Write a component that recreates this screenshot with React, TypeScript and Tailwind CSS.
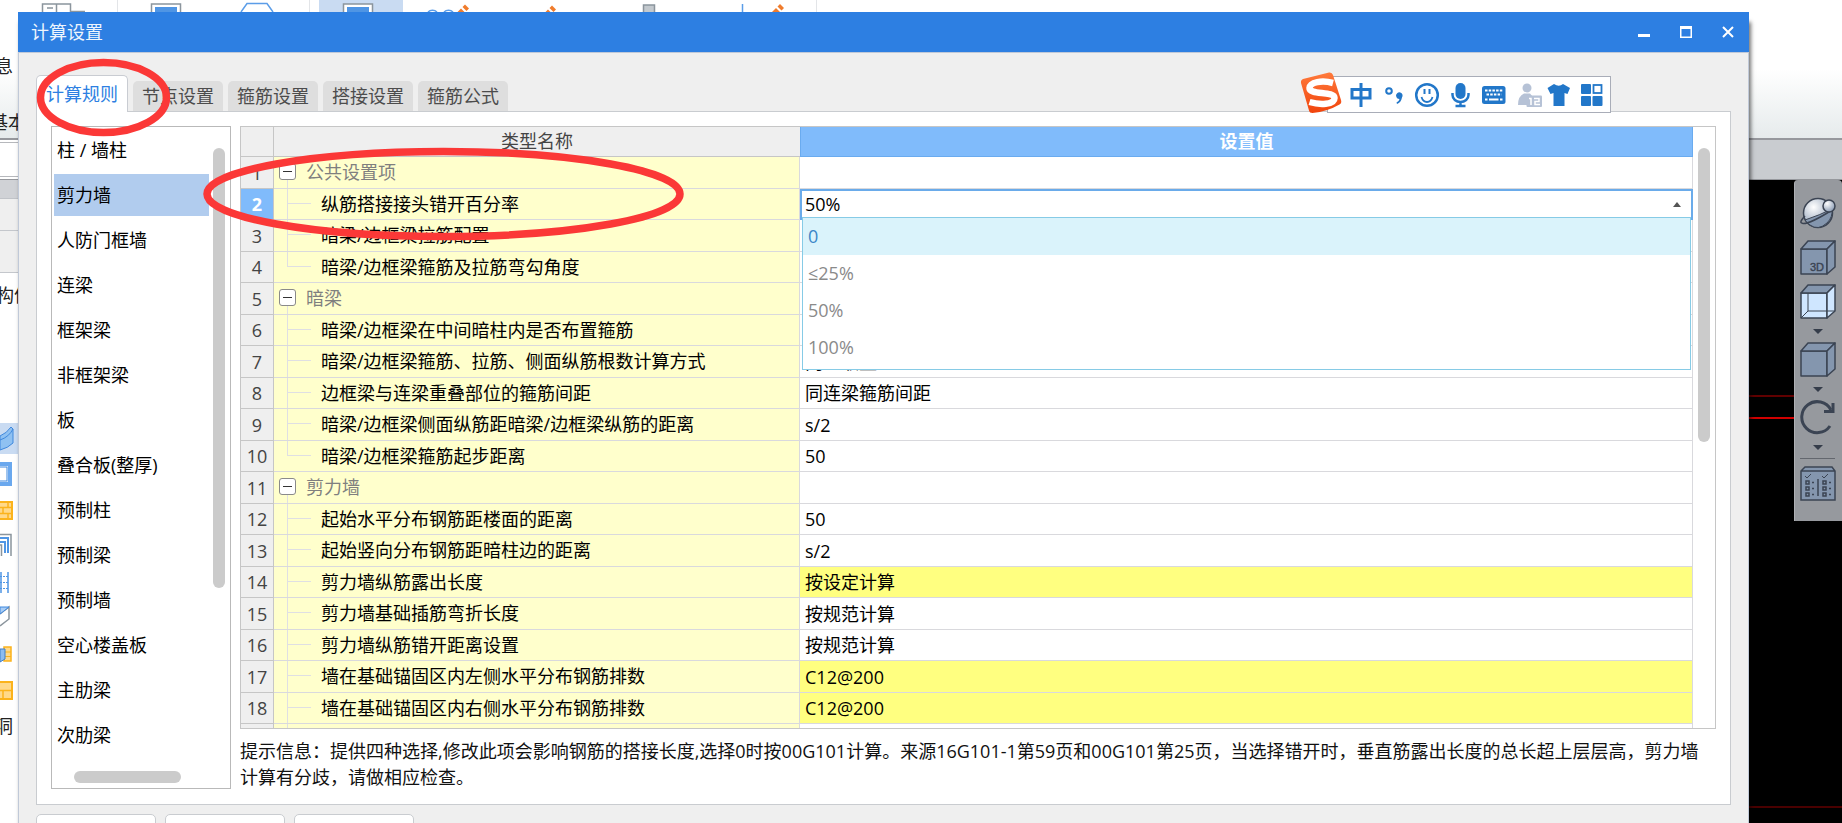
import { useState } from "react"
import clsx from "clsx"

interface Row {
  name: string
  value?: string
  group?: boolean
  last?: boolean
  marked?: boolean
}

const tabs = ["计算规则", "节点设置", "箍筋设置", "搭接设置", "箍筋公式"]

const components = [
  "柱 / 墙柱",
  "剪力墙",
  "人防门框墙",
  "连梁",
  "框架梁",
  "非框架梁",
  "板",
  "叠合板(整厚)",
  "预制柱",
  "预制梁",
  "预制墙",
  "空心楼盖板",
  "主肋梁",
  "次肋梁",
]

const rows: Row[] = [
  { name: "公共设置项", group: true },
  { name: "纵筋搭接接头错开百分率" },
  { name: "暗梁/边框梁拉筋配置" },
  { name: "暗梁/边框梁箍筋及拉筋弯勾角度", last: true },
  { name: "暗梁", group: true },
  { name: "暗梁/边框梁在中间暗柱内是否布置箍筋" },
  { name: "暗梁/边框梁箍筋、拉筋、侧面纵筋根数计算方式", value: "向上取整+1" },
  { name: "边框梁与连梁重叠部位的箍筋间距", value: "同连梁箍筋间距" },
  { name: "暗梁/边框梁侧面纵筋距暗梁/边框梁纵筋的距离", value: "s/2" },
  { name: "暗梁/边框梁箍筋起步距离", value: "50", last: true },
  { name: "剪力墙", group: true },
  { name: "起始水平分布钢筋距楼面的距离", value: "50" },
  { name: "起始竖向分布钢筋距暗柱边的距离", value: "s/2" },
  { name: "剪力墙纵筋露出长度", value: "按设定计算", marked: true },
  { name: "剪力墙基础插筋弯折长度", value: "按规范计算" },
  { name: "剪力墙纵筋错开距离设置", value: "按规范计算" },
  { name: "墙在基础锚固区内左侧水平分布钢筋排数", value: "C12@200", marked: true },
  { name: "墙在基础锚固区内右侧水平分布钢筋排数", value: "C12@200", marked: true },
  { name: "" },
]

const options = ["0", "≤25%", "50%", "100%"]

function RibbonIcons() {
  return (
    <svg className="block h-3 w-[830px]" viewBox="0 0 830 12" fill="none">
      <rect x="319" y="0" width="84" height="12" fill="#c9dbf2" />
      <g stroke="#e3e5e8">
        <path d="M117.5 0v12M309.5 0v12M816.5 0v12" />
      </g>
      <g stroke="#8b959d" strokeWidth="1.5">
        <path d="M42.5 12V4h28v8M56.5 4v8M47 8h6M71 11.5h14" />
        <path d="M151.5 12V4h29v8M343.5 12V4h29v8" fill="#fff" />
      </g>
      <path d="M155 7h22v5h-22zM347 7h22v5h-22z" fill="#4f95e4" />
      <path d="M241 12l6-8.500h20l6 8.500" stroke="#5b9de8" strokeWidth="1.500" />
      <path d="M428 12a6 5 0 0 1 9 0M444 12a6 5 0 0 1 9 0" stroke="#5b9de8" strokeWidth="1.500" />
      <g fill="#f07c2c">
        <path d="M465 4.500l4 4-2.500 2.500-4-4zM461 8.500l4 4h-8z" />
        <path d="M552 5.500l4 4-2.500 2.500-4-4zM548 9.500l3 3h-6z" />
        <path d="M780 4l4 4-2.500 2.500-4-4zM776 8l4 4h-8z" />
      </g>
      <path d="M643.500 12V5h11v7" fill="#c3c9ce" stroke="#8b959d" strokeWidth="1.500" />
      <path d="M742.500 4v8" stroke="#5b9de8" strokeWidth="1.500" />
    </svg>
  )
}

// slice of the component tree that stays visible left of the dialog
function LeftStrip() {
  return (
    <div className="flex w-[18px] flex-col overflow-hidden whitespace-nowrap bg-white">
      <div className="h-[19px] border-b border-[#c0c3c8] bg-[#d0d2d6]" />
      <div className="h-8 border-b border-[#c4c7cc] bg-[#efefef]" />
      <div className="h-[42px] border-b border-[#c4c7cc] bg-[#efefef]" />
      <span className="-ml-1 mt-[9px] leading-[26px]">构件</span>
      <svg className="mt-[115px] h-[282px] w-[18px] shrink-0" viewBox="0 0 18 282" fill="none">
        <rect width="18" height="31" fill="#c9dbf2" />
        <path d="M0 13q7-3 11-9l2 2v14q-5 5-13 7z" fill="#8fc1f2" stroke="#3f88dd" />
        <path d="M0 17q9-3 13-11" stroke="#3f88dd" />
        <rect x="-8" y="41" width="18" height="20" stroke="#6aa8ee" strokeWidth="4" />
        <rect x="-8" y="44" width="15" height="14" stroke="#3f88dd" />
        <rect x="-3" y="79" width="15" height="17" fill="#ffd98a" stroke="#fbb31c" strokeWidth="2" />
        <path d="M0 84.500h12M0 90.500h12M8 79v5M3 84v6M8 90v6" stroke="#fbb31c" strokeWidth="1.500" />
        <path d="M0 111.500h11V133" stroke="#8b959d" strokeWidth="1.500" />
        <path d="M0 115h8v15M0 119h5v11" stroke="#4f95e4" strokeWidth="2" />
        <path d="M0 122h1.500v11" stroke="#8b959d" strokeWidth="1.500" />
        <path d="M1 149v21M8 149v21" stroke="#4f95e4" strokeWidth="1.500" />
        <path d="M0 153.500h8M0 159.500h8M0 165.500h8" stroke="#4f95e4" strokeDasharray="2 1" />
        <path d="M0 191l9-7v12l-9 7" stroke="#8b959d" strokeWidth="1.500" />
        <path d="M0 184h9l-9 7z" fill="#a9cdf5" stroke="#3f88dd" />
        <path d="M4 224h7v14H4z" fill="#ffd98a" stroke="#fbb31c" strokeWidth="1.500" />
        <path d="M5 229h6M5 233.500h6" stroke="#fbb31c" />
        <path d="M0 226h5v10l-5 3z" fill="#8dbcf0" stroke="#3f7fc9" />
        <rect x="-3" y="259" width="15" height="17" fill="#ffd98a" stroke="#fbb31c" strokeWidth="2" />
        <path d="M0 267.500h12M3 267v9" stroke="#fbb31c" strokeWidth="1.500" />
      </svg>
      <span className="-ml-[5px] mt-2 leading-[26px]">洞</span>
    </div>
  )
}

function Cube({ label, wire }: { label?: string; wire?: boolean }) {
  return (
    <svg className="h-9 w-9" viewBox="0 0 36 36" stroke="#3b4453" strokeWidth="1.500" strokeLinejoin="round">
      <path d="M1 9h26v25H1z" fill={wire ? "#cfe6ff" : "#8496ae"} />
      <path d="M1 9l7-8h27l-8 8z" fill="#8496ae" />
      <path d="M27 9l8-8v26l-8 7z" fill={wire ? "#cfe6ff" : "#8496ae"} />
      {wire && <path d="M8 9v18h27M8 27l-7 7" fill="none" strokeWidth="1" />}
      {label && (
        <text x="10" y="31" fontSize="11" fill="#3b4453" strokeWidth=".4" fontFamily="Liberation Sans, sans-serif">
          {label}
        </text>
      )}
    </svg>
  )
}

function DownArrow() {
  return (
    <svg className="my-[7px] h-[8px] w-[10px]" viewBox="0 0 10 8">
      <path d="M0 2h10L5 7z" fill="#353d4a" />
    </svg>
  )
}

function ViewToolbar() {
  return (
    <div className="flex h-[341px] w-12 flex-col items-center rounded-t border-l border-[#aeb0b4] bg-[#96999e] pr-[2px] pt-4">
      <button aria-label="动态观察">
        <svg className="h-9 w-9" viewBox="0 0 36 36" fill="none" stroke="#3b4453">
          <defs>
            <radialGradient id="ball" cx=".35" cy=".3" r=".8">
              <stop offset="0" stopColor="#fff" />
              <stop offset="1" stopColor="#7d90ab" />
            </radialGradient>
          </defs>
          <circle cx="18" cy="17" r="14.500" fill="url(#ball)" strokeWidth="1.500" />
          <path d="M5 24Q20 19 32 13q1 8-5 14-9 8-17 2-3-2-5-5z" fill="#8496ae" />
          <path d="M5 20q-7 7-2 7.500Q10 28 32 14" strokeWidth="1.500" />
          <circle cx="29" cy="10" r="6" fill="url(#ball)" strokeWidth="1.500" />
        </svg>
      </button>
      <button className="mt-2" aria-label="三维">
        <Cube label="3D" />
      </button>
      <button className="mt-2" aria-label="线框">
        <Cube wire />
      </button>
      <DownArrow />
      <button aria-label="实体">
        <Cube />
      </button>
      <DownArrow />
      <button aria-label="旋转">
        <svg className="h-9 w-9" viewBox="0 0 36 36" fill="none" stroke="#3b4453" strokeWidth="3">
          <path d="M30 26A15.500 15.500 0 1 1 31 10" />
          <path d="M33 3v8.500h-9" />
        </svg>
      </button>
      <DownArrow />
      <div className="h-px w-[35px] bg-[#63676e]" />
      <button className="mt-[6px]" aria-label="显示设置">
        <svg className="h-9 w-9" viewBox="0 0 36 36" fill="none" stroke="#3b4453" strokeWidth="1.500">
          <path d="M1 6l4-4h27l3 4v29H1zM1 6h34" fill="#8496ae" />
          <path d="M18 14v17" />
          <path d="M5 11l2 2 4-4M22 11l2 2 4-4" strokeWidth="1" />
          <path d="M6 16h3v3H6zM6 22h3v3H6zM6 28h3v3H6zM23 16h3v3h-3zM23 22h3v3h-3zM23 28h3v3h-3zM12 17.500h2M12 23.500h2M12 29.500h2M29 17.500h2M29 23.500h2M29 29.500h2" />
        </svg>
      </button>
    </div>
  )
}

function InputMethodBar() {
  return (
    <div className="absolute right-[231px] top-[76px] flex h-[37px] w-[284px] items-center border border-[#a9adb8] bg-white pl-[22px]">
      <svg className="absolute -left-[30px] -top-[6px] h-[44px] w-[46px]" viewBox="0 0 46 44">
        <defs>
          <linearGradient id="sogou" x1="0" y1="0" x2="0" y2="1">
            <stop offset="0" stopColor="#ff7a3c" />
            <stop offset="1" stopColor="#f1440c" />
          </linearGradient>
        </defs>
        <path
          d="M5 8L31 1.500q3-.5 4 2.500l8 25q1 3-1.500 4.500-12 7-27 8.500-3 0-3.500-2.500L3 12q-.5-3 2-4z"
          fill="url(#sogou)"
        />
        <path
          d="M35 12C24 9 12 11 11.500 17c-.5 7 25 3 25 10 0 7-15 7-25 4"
          fill="none"
          stroke="#fff"
          strokeWidth="6.500"
        />
      </svg>
      <svg className="h-[26px] w-[231px] shrink-0" viewBox="0 0 231 26" fill="none" stroke="#2277c9">
        <path d="M2 7.500h18v8.500H2zM11 1v24" strokeWidth="3" />
        <circle cx="39" cy="9" r="2.800" strokeWidth="2" />
        <path d="M46 13.500a3.300 3.300 0 1 1 6 2q-1 5-5 6.500l-.5-1.500q2.500-1 3-3.500-3 0-3.500-3.500z" fill="#2277c9" stroke="none" />
        <circle cx="77" cy="13" r="10.800" strokeWidth="2.500" />
        <path d="M74.500 7v5M79.500 7v5" strokeWidth="2" />
        <path d="M71.500 15q1.500 5 5.500 5t5.500-5" strokeWidth="1.800" />
        <rect x="105.500" y="1" width="10" height="16" rx="5" fill="#2277c9" stroke="none" />
        <path d="M102.500 11v2a8 7 0 0 0 16 0v-2M110.500 20v4M105.500 24h10" strokeWidth="2.500" />
        <rect x="132" y="4" width="23.500" height="18" rx="2.500" fill="#2277c9" stroke="none" />
        <g stroke="#fff" strokeWidth="2.200">
          <path d="M135 8.500h18M136.500 12.500h15" strokeDasharray="2.500 1.200" />
          <path d="M135 17.500h2.500M139 17.500h9.500M150 17.500h2.500" />
        </g>
        <g fill="#b6c2d6" stroke="none">
          <circle cx="177" cy="6" r="4.500" />
          <path d="M174 11.500h6l3 3.500h-6v8h-9q0-9 6-11.500z" />
          <rect x="176.500" y="13.500" width="15.500" height="11.500" rx="1" />
          <path d="M179 16.500h2v6.500M184 16.500h5v3h-4v3h5" fill="none" stroke="#fff" strokeWidth="1.500" />
        </g>
        <path d="M204 2q5 3.500 9 0l7 4-2.500 6-3-1v13h-11V11l-3 1-3-6z" fill="#2277c9" stroke="none" />
      </svg>
      <svg className="h-[22px] w-[22px] shrink-0" viewBox="0 0 22 22" fill="#2277c9">
        <rect width="10" height="10" rx="1" />
        <rect y="12" width="10" height="10" rx="1" />
        <rect x="11.500" y="12" width="10" height="10" rx="1" />
        <rect x="12.500" y="1" width="8" height="8" fill="#fff" stroke="#2277c9" strokeWidth="1.800" />
      </svg>
    </div>
  )
}

function NameCell({ row, tall }: { row: Row; tall: boolean }) {
  const height = tall ? "h-[31px]" : "h-[30px]"
  if (row.group) {
    return (
      <div className={clsx("flex pl-[5px] text-[#7f7f7f]", height)}>
        <span className="flex w-[17px] flex-col items-center pt-[6px]">
          <button
            aria-label="折叠"
            className="flex h-[17px] w-[17px] shrink-0 items-center justify-center rounded-[3px] border border-[#8a8a8a] bg-white"
          >
            <span className="h-px w-[9px] bg-[#333]" />
          </button>
          <span className="w-px flex-1 bg-[#dfdfe3]" />
        </span>
        <span className="ml-[10px] leading-[31px]">{row.name}</span>
      </div>
    )
  }
  return (
    <div className={clsx("flex pl-[13px] text-black", height)}>
      <span className="flex w-6 flex-col">
        <span className={clsx("h-[15px] border-l border-[#dfdfe3]", row.name && "border-b")} />
        {!row.last && <span className="flex-1 border-l border-[#dfdfe3]" />}
      </span>
      <span className="ml-[10px] leading-[31px]">{row.name}</span>
    </div>
  )
}

function SettingsTable() {
  const [value, setValue] = useState("50%")

  return (
    <div className="relative flex h-[603px] overflow-hidden border border-[#c6c6c6] bg-white">
      <table className="flex-1 table-fixed border-separate border-spacing-0 whitespace-nowrap">
        <colgroup>
          <col className="w-[33px]" />
          <col className="w-[526px]" />
          <col />
        </colgroup>
        <thead>
          <tr className="h-[30px] text-center leading-[29px]">
            <th className="border-b border-r border-[#c6c6c6] bg-[#efefef] p-0" />
            <th className="border-b border-[#c6c6c6] bg-[#efefef] p-0 font-normal text-[#444]">类型名称</th>
            <th className="border-x border-b border-[#6aabef] bg-[#80bbfb] p-0 font-bold text-white">设置值</th>
          </tr>
        </thead>
        <tbody>
          {rows.map((row, i) => (
            <tr key={i} className={i % 2 === 0 ? "h-8" : "h-[31px]"}>
              <td
                className={clsx(
                  "border-b border-r border-[#c6c6c6] p-0 text-center leading-[30px]",
                  i === 1 ? "bg-[#80bbfb] font-bold text-white" : "bg-[#efefef] text-[#444]"
                )}
              >
                {row.name && i + 1}
              </td>
              <td className="border-b border-r border-[#d9d9dd] bg-[#ffffcc] p-0">
                <NameCell row={row} tall={i % 2 === 0} />
              </td>
              {i === 1 ? (
                <td className="border-2 border-b-0 border-[#6aabea] p-0 align-top">
                  <div className="relative flex items-center">
                    <select
                      aria-label={row.name}
                      value={value}
                      onChange={e => setValue(e.target.value)}
                      className="h-[27px] w-full appearance-none bg-transparent pl-[3px] text-black outline-none"
                    >
                      {options.map(o => (
                        <option key={o}>{o}</option>
                      ))}
                    </select>
                    <svg className="pointer-events-none absolute right-[10px] h-[5px] w-[8px]" viewBox="0 0 8 5">
                      <path d="M4 0l4 5H0z" fill="#555" />
                    </svg>
                    <ul
                      role="listbox"
                      className="absolute left-0 right-0 top-[26px] z-10 h-[153px] overflow-hidden border border-[#86cbe6] bg-white leading-[37px] text-[#8a8a8a]"
                    >
                      {options.map((o, n) => (
                        <li
                          key={o}
                          role="option"
                          aria-selected={n === 0}
                          onClick={() => setValue(o)}
                          className={clsx("h-[37px] pl-[5px]", n === 0 && "bg-[#daf3fb] text-[#3a87c8]")}
                        >
                          {o}
                        </li>
                      ))}
                    </ul>
                  </div>
                </td>
              ) : (
                <td
                  className={clsx(
                    "border-b border-r border-[#d9d9dd] p-0 pl-[5px] leading-[30px] text-black",
                    row.marked ? "bg-[#ffff80]" : "bg-white"
                  )}
                >
                  {row.value}
                </td>
              )}
            </tr>
          ))}
        </tbody>
      </table>
      <div className="w-[22px] pl-[5px] pt-[21px]">
        <div className="h-[294px] w-3 rounded-full bg-[#cbcbcb]" />
      </div>
    </div>
  )
}

function ComponentList() {
  const [selected, setSelected] = useState("剪力墙")

  return (
    <div className="flex h-[663px] w-[180px] shrink-0 flex-col border border-[#b9b9b9] bg-white">
      <div className="flex flex-1 justify-between pl-[2px] pr-[5px]">
        <ul className="flex w-[155px] flex-col gap-[3px] pt-[2px]">
          {components.map(name => (
            <li key={name}>
              <button
                onClick={() => setSelected(name)}
                className={clsx(
                  "block h-[42px] w-full pl-[3px] text-left leading-[43px] text-black",
                  name === selected && "bg-[#b1ccee]"
                )}
              >
                {name}
              </button>
            </li>
          ))}
        </ul>
        <div className="mt-[21px] h-[440px] w-3 rounded-full bg-[#cbcbcb]" />
      </div>
      <div className="mb-[5px] ml-[22px] h-3 w-[107px] rounded-full bg-[#cbcbcb]" />
    </div>
  )
}

export default function App() {
  const [tab, setTab] = useState(tabs[0])

  return (
    <div className="relative flex h-screen flex-col overflow-hidden bg-white font-['Open_Sans','Noto_Sans_CJK_SC',sans-serif] text-[18px] text-[#222]">
      {/* main window behind the dialog */}
      <div className="flex h-[138px] flex-col overflow-hidden whitespace-nowrap bg-linear-to-b from-white from-50% to-[#e6ebec]">
        <RibbonIcons />
        <span className="-ml-[5px] mt-[41px] leading-[26px]">息</span>
        <span className="-ml-[10px] mt-[30px] leading-[26px]">基本</span>
      </div>
      <div className="flex h-[42px] shrink-0 border-b border-t-2 border-[#96989d]">
        <div className="my-[2px] w-[18px] border-y border-[#b6b8bc] bg-white" />
        <div className="flex-1 bg-[#c9ccd0]" />
      </div>
      <div className="flex flex-1 overflow-hidden">
        <LeftStrip />
        <div className="flex flex-1 justify-end bg-black">
          <div className="flex flex-1 flex-col">
            <div className="mt-[215px] h-[2px] bg-[#600000]" />
            <div className="mt-5 h-[2px] bg-[#d00000]" />
          </div>
          <ViewToolbar />
        </div>
      </div>
      <div className="absolute bottom-[15px] right-0 h-[2px] w-[93px] bg-[#4a0000]" />

      {/* dialog */}
      <div className="absolute left-[18px] right-[93px] top-3 shadow-[2px_10px_4px_rgba(0,0,0,0.55)]">
        <header className="flex h-10 items-center justify-between bg-[#2d7fe2] pl-[13px] pr-[15px] text-[#eef5fd]">
          <h1>计算设置</h1>
          <div className="flex gap-[30px]">
            <button aria-label="最小化">
              <svg className="block h-3 w-3" viewBox="0 0 12 12">
                <path d="M0 8h12v3H0z" fill="#fff" />
              </svg>
            </button>
            <button aria-label="最大化">
              <svg className="block h-3 w-3" viewBox="0 0 12 12">
                <path d="M0 0h12v12H0zM1.500 3v7.500h9V3z" fill="#fff" fillRule="evenodd" />
              </svg>
            </button>
            <button aria-label="关闭">
              <svg className="block h-3 w-3" viewBox="0 0 12 12">
                <path d="M1 1l10 10M11 1L1 11" stroke="#fff" strokeWidth="2" />
              </svg>
            </button>
          </div>
        </header>

        <div className="border border-[#c0c9d8] bg-[#efefef] px-[17px] pt-[22px]">
          <nav className="flex items-end gap-[5px]">
            {tabs.map(t => (
              <button
                key={t}
                onClick={() => setTab(t)}
                className={clsx(
                  "rounded-t-[5px]",
                  t === tab
                    ? "relative -mb-px h-[37px] w-[92px] border border-b-0 border-[#c9ccd2] bg-white text-[#2d7fe2]"
                    : "h-[30px] w-[90px] bg-[#dedede] text-[#4c4c4c]"
                )}
              >
                {t}
              </button>
            ))}
          </nav>

          <section className="flex gap-[9px] border border-[#c9ccd0] bg-white p-[14px]">
            <ComponentList />
            <div className="min-w-0 flex-1">
              <SettingsTable />
              <p className="mt-[9px] leading-[26px] text-[#111]">
                提示信息：提供四种选择,修改此项会影响钢筋的搭接长度,选择0时按00G101计算。来源16G101-1第59页和00G101第25页，当选择错开时，垂直筋露出长度的总长超上层层高，剪力墙计算有分歧，请做相应检查。
              </p>
            </div>
          </section>

          <footer className="flex gap-[9px] pt-[9px]">
            {["导入规则", "导出规则", "恢复默认"].map(label => (
              <button
                key={label}
                aria-label={label}
                className="h-10 w-[120px] rounded-[5px] border border-[#c9ccd0] bg-white"
              />
            ))}
          </footer>
        </div>
      </div>

      <InputMethodBar />

      {/* red marks */}
      <svg className="pointer-events-none absolute left-0 top-0 h-[250px] w-[700px]" viewBox="0 0 700 250" fill="none">
        <g stroke="#fb3837" strokeWidth="7.500">
          <ellipse cx="103.500" cy="97.500" rx="63" ry="35" />
          <ellipse cx="443.500" cy="194" rx="236.500" ry="42.500" />
        </g>
      </svg>
    </div>
  )
}
